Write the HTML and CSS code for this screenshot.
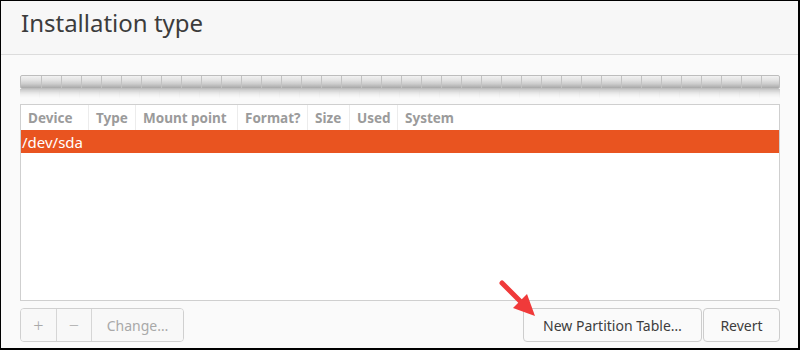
FILE: index.html
```html
<!DOCTYPE html>
<html>
<head>
<meta charset="utf-8">
<link rel="stylesheet" href="styles.css">
</head>
<body>
<div class="window">
  <header class="head"><h1 class="title">Installation type</h1></header>
  <main class="content">
    <div class="bar-wrap">
      <div class="bar"></div>
      <div class="bar-reflect"></div>
    </div>
    <div class="table">
      <div class="thead">
        <span class="col c-device">Device</span>
        <span class="col c-type">Type</span>
        <span class="col c-mount">Mount point</span>
        <span class="col c-format">Format?</span>
        <span class="col c-size">Size</span>
        <span class="col c-used">Used</span>
        <span class="col c-system">System</span>
      </div>
      <div class="row selected">/dev/sda</div>
    </div>
    <div class="actions">
      <div class="group">
        <button class="btn icon" disabled>+</button>
        <button class="btn icon" disabled>−</button>
        <button class="btn change" disabled>Change…</button>
      </div>
      <div class="right">
        <button class="btn newpt">New Partition Table…</button>
        <button class="btn revert">Revert</button>
      </div>
    </div>
  </main>
  <svg class="arrow" width="50" height="50" viewBox="0 0 50 50">
    <line x1="4" y1="5" x2="26" y2="27" stroke="#f03a3a" stroke-width="5" stroke-linecap="round"/>
    <polygon points="37,38 15,30 29,16" fill="#f03a3a"/>
  </svg>
</div>
</body>
</html>
```
FILE: styles.css
```css
* { box-sizing: border-box; }
html, body { margin: 0; padding: 0; }
body {
  width: 800px;
  height: 350px;
  font-family: "Noto Sans", "Open Sans", sans-serif;
  background: #000;
}
.window {
  position: relative;
  width: 800px;
  height: 350px;
  border-style: solid;
  border-color: #000;
  border-width: 1px 2px 2px 1px;
  background: #fafafa;
  display: flex;
  flex-direction: column;
  overflow: hidden;
}
.head {
  height: 54px;
  background: #f7f7f7;
  border-bottom: 1px solid #dcdcdc;
  padding: 0 0 0 20px;
  display: flex;
  align-items: center;
}
.title {
  margin: 0;
  font-size: 24px;
  font-weight: 400;
  color: #3c3c3c;
  position: relative;
  top: -5px;
}
.content {
  flex: 1;
  padding: 20px 18px 0 19px;
  display: flex;
  flex-direction: column;
}
.bar-wrap { height: 29px; }
.bar {
  height: 14px;
  border: 1px solid #bdbdbd;
  border-radius: 2px;
  background:
    repeating-linear-gradient(90deg, transparent 0 19px, #c2c2c2 19px 20px),
    linear-gradient(#f2f2f2 0%, #e2e2e2 35%, #cdcdcd 65%, #a8a8a8 100%);
  background-position: 1px 0, 0 0;
}
.bar-reflect {
  height: 10px;
  background:
    repeating-linear-gradient(90deg, transparent 0 19px, rgba(200,200,200,0.4) 19px 20px),
    linear-gradient(rgba(150,150,150,0.55), rgba(250,250,250,0));
  -webkit-mask-image: linear-gradient(#000, transparent);
  mask-image: linear-gradient(#000, transparent);
}
.table {
  height: 197px;
  background: #fff;
  border: 1px solid #cfcfcf;
}
.thead {
  display: flex;
  height: 25px;
  align-items: stretch;
}
.col {
  font-size: 13.5px;
  font-weight: 700;
  color: #9b9b9b;
  padding-left: 7px;
  display: flex;
  align-items: center;
  border-right: 1px solid #ececec;
}
.c-device { width: 68px; }
.c-type { width: 47px; }
.c-mount { width: 102px; }
.c-format { width: 70px; }
.c-size { width: 42px; }
.c-used { width: 48px; }
.c-system { border-right: none; flex: 1; }
.row {
  height: 23px;
  font-size: 15px;
  padding-left: 1px;
  display: flex;
  align-items: center;
}
.row.selected {
  background: #e95420;
  color: #fff;
}
.actions {
  margin-top: 7px;
  display: flex;
  justify-content: space-between;
}
.group {
  display: flex;
  border: 1px solid #d0d0d0;
  border-radius: 4px;
  overflow: hidden;
  height: 34px;
}
.btn {
  font-family: "Noto Sans", "Open Sans", sans-serif;
  font-size: 14px;
  color: #3d3d3d;
  background: #fafafa;
  border: 1px solid #cdcdcd;
  border-radius: 4px;
  height: 34px;
  padding: 0;
}
.group .btn {
  border: none;
  border-radius: 0;
  height: 32px;
  color: #a9a9a9;
  background: #f8f8f8;
}
.group .btn + .btn { border-left: 1px solid #d6d6d6; }
.btn.icon { width: 35px; font-size: 18px; font-weight: 300; }
.btn.change { width: 92px; }
.right { display: flex; gap: 1px; }
.btn.newpt { width: 179px; }
.btn.revert { width: 77px; }
.arrow {
  position: absolute;
  left: 497px;
  top: 277px;
}
```
